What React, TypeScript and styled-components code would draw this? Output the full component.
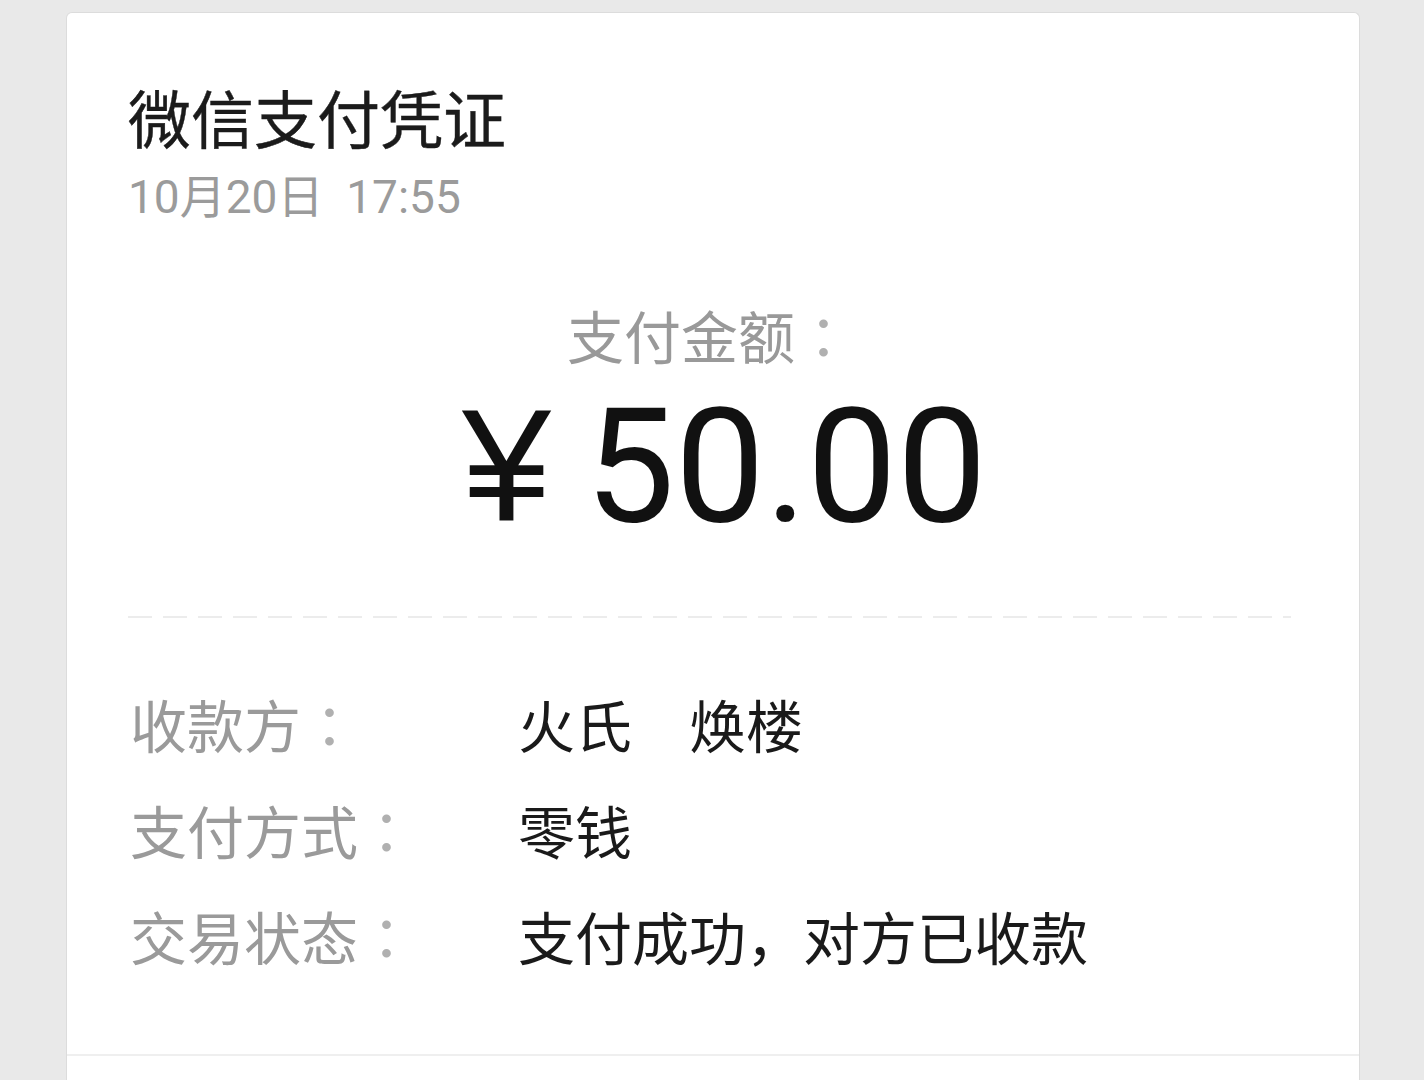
import styled, { createGlobalStyle } from "styled-components";

const GlobalStyle = createGlobalStyle`
  html, body {
    margin: 0;
    padding: 0;
    background: #e9e9e9;
  }
  body {
    font-family: Roboto, "Noto Sans CJK SC", sans-serif;
  }
`;

const Page = styled.div`
  min-height: 1080px;
  padding: 12px 64px 0 66px;
  box-sizing: border-box;
  overflow: hidden;
`;

const Card = styled.div`
  background: #fff;
  border: 1px solid #dcdcdc;
  border-bottom: none;
  border-radius: 6px 6px 0 0;
  min-height: 1068px;
`;

const Content = styled.div`
  padding: 66px 68px 66px 61px;
  display: flex;
  flex-direction: column;
`;

const Title = styled.div`
  font-size: 63px;
  line-height: 74px;
  color: #1b1b1b;
  font-family: "Noto Sans CJK SC", sans-serif;
  -webkit-text-stroke: 0.4px #1b1b1b;
`;

const DateLine = styled.div`
  margin-top: 17px;
  font-size: 46px;
  line-height: 54px;
  color: #9b9b9b;
  white-space: pre;
`;

const AmountLabel = styled.div`
  margin-top: 76px;
  text-align: center;
  font-family: "Noto Sans CJK SC", sans-serif;
  font-size: 57px;
  line-height: 68px;
  color: #999;
`;

const Amount = styled.div`
  margin-top: 13px;
  text-align: center;
  font-size: 160px;
  line-height: 170px;
  color: #111;
  padding-left: 30px;
`;

const Currency = styled.span`
  font-family: "Liberation Sans", sans-serif;
  margin-right: 34px;
`;

const Punct = styled.span`
  font-family: "Noto Sans CJK TC", sans-serif;
  color: #b0b0b0;
`;

const Divider = styled.div`
  margin-top: 64px;
  height: 2px;
  background: repeating-linear-gradient(
    to right,
    #ececec 0 24px,
    transparent 24px 35px
  );
`;

const Rows = styled.div`
  margin-top: 52px;
  display: flex;
  flex-direction: column;
`;

const Row = styled.div`
  display: grid;
  grid-template-columns: 390px 1fr;
  font-family: "Noto Sans CJK SC", sans-serif;
  font-size: 57px;
  line-height: 106px;
`;

const Label = styled.div`
  color: #9a9a9a;
  padding-left: 2px;
`;

const Value = styled.div`
  color: #1a1a1a;
  white-space: pre;
`;

const Footer = styled.div`
  border-top: 2px solid #efefef;
  height: 30px;
`;

const rows = [
  { label: "收款方", value: "火氏　焕楼" },
  { label: "支付方式", value: "零钱" },
  { label: "交易状态", value: "支付成功，对方已收款" },
];

export default function App() {
  return (
    <>
      <GlobalStyle />
      <Page>
        <Card>
          <Content>
            <Title>微信支付凭证</Title>
            <DateLine>{"10月20日  17:55"}</DateLine>
            <AmountLabel>
              支付金额<Punct>：</Punct>
            </AmountLabel>
            <Amount>
              <Currency>¥</Currency>50.00
            </Amount>
            <Divider />
            <Rows>
              {rows.map((r) => (
                <Row key={r.label}>
                  <Label>
                    {r.label}
                    <Punct>：</Punct>
                  </Label>
                  <Value>{r.value}</Value>
                </Row>
              ))}
            </Rows>
          </Content>
          <Footer />
        </Card>
      </Page>
    </>
  );
}
